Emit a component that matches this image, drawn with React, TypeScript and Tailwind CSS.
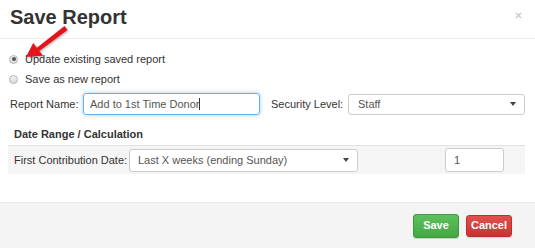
import { X } from "lucide-react";

function Caret() {
  return (
    <svg width="6" height="5" viewBox="0 0 6 5" className="absolute right-[8px] top-1/2 -translate-y-1/2">
      <path d="M0 0.5 L6 0.5 L3 4.5 Z" fill="#444" />
    </svg>
  );
}

function Radio({ checked }: { checked?: boolean }) {
  return (
    <span className="w-[9px] h-[9px] rounded-full border border-[#b5b5b5] bg-gradient-to-b from-[#f4f4f4] to-[#d8d8d8] flex items-center justify-center">
      {checked && <span className="w-[4px] h-[4px] rounded-full bg-[#555]" />}
    </span>
  );
}

export default function App() {
  return (
    <div className="relative w-[535px] h-[248px] bg-white text-[#333] text-[11px] overflow-hidden font-['Liberation_Sans',Arial,sans-serif] flex flex-col">
      <header className="h-[39px] shrink-0 border-b border-[#eeeeee] flex items-center justify-between pl-[10px] pr-[12px]">
        <h1 className="text-[20px] font-bold leading-none -mt-[4px]">Save Report</h1>
        <X size={9} strokeWidth={3.5} className="text-[#c8c8c8] -mt-[7px]" />
      </header>

      <div className="flex-1 flex flex-col pt-[12px] pl-[8px] pr-[10px]">
        <label className="flex items-center gap-[7px] h-[16px] pl-[1px]">
          <Radio checked />
          <span>Update existing saved report</span>
        </label>
        <label className="flex items-center gap-[7px] h-[16px] mt-[4px] pl-[1px]">
          <Radio />
          <span>Save as new report</span>
        </label>

        <div className="flex items-center h-[24px] mt-[5px] pl-[2px]">
          <span className="w-[73px]">Report Name:</span>
          <div className="w-[177px] h-[22px] border border-[#66afe9] rounded-[3px] shadow-[0_0_4px_rgba(102,175,233,0.6)] flex items-center px-[6px] text-[#555]">
            Add to 1st Time Donor
            <span className="inline-block w-px h-[12px] bg-[#333]" />
          </div>
          <span className="ml-[11px] w-[77px]">Security Level:</span>
          <div className="relative w-[177px] h-[21px] border border-[#ccc] rounded-[3px] flex items-center px-[9px] text-[#555]">
            Staff
            <Caret />
          </div>
        </div>

        <div className="mt-[10px] h-[16px] flex items-center pl-[6px] font-bold">Date Range / Calculation</div>

        <div className="mt-[3px] h-[29px] bg-[#f5f5f5] border-t border-[#e2e2e2] flex items-center pl-[6px]">
          <span className="w-[115px]">First Contribution Date:</span>
          <div className="relative w-[229px] h-[23px] bg-white border border-[#ccc] rounded-[3px] flex items-center px-[8px] text-[#555]">
            Last X weeks (ending Sunday)
            <Caret />
          </div>
          <div className="ml-[87px] w-[59px] h-[24px] bg-white border border-[#ccc] rounded-[3px] flex items-center px-[8px] text-[#555]">
            1
          </div>
        </div>
      </div>

      <footer className="h-[46px] shrink-0 bg-[#f4f4f4] border-t border-[#ececec] flex items-center justify-end gap-[7px] pr-[23px]">
        <button className="w-[46px] h-[24px] rounded-[3px] bg-gradient-to-b from-[#5cc15c] to-[#45a845] border border-[#3d9a3d] text-white font-bold text-[11px] shadow-[0_1px_1px_rgba(0,0,0,0.15)]">
          Save
        </button>
        <button className="w-[46px] h-[22px] rounded-[3px] bg-gradient-to-b from-[#e0504c] to-[#c63431] border border-[#b73330] text-white font-bold text-[11px] shadow-[0_1px_1px_rgba(0,0,0,0.15)]">
          Cancel
        </button>
      </footer>

      <svg className="absolute left-0 top-0 drop-shadow-[1px_1px_1px_rgba(0,0,0,0.3)]" width="80" height="70" viewBox="0 0 80 70">
        <path d="M26 57 L43 55.8 L39.3 51 L67.5 30 L64.5 26 L36.9 47.8 L33.2 43 Z" fill="#e3151a" />
      </svg>
    </div>
  );
}
